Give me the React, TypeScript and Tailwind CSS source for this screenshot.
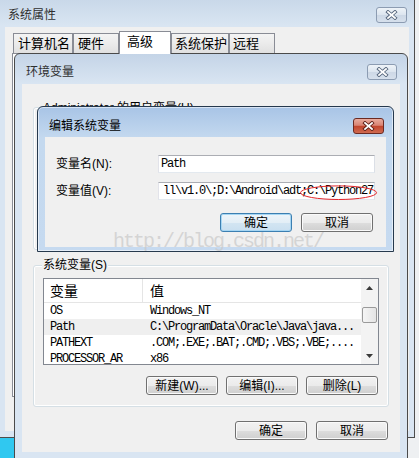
import React from 'react'

const ui = "font-['Liberation_Sans','Noto_Sans_CJK_SC',sans-serif]"
const mono = "font-['Liberation_Mono',monospace] tracking-[-1.2px]"

function CloseBtn({ active, className }: { active?: boolean; className: string }) {
    const edge = active ? '#5c1e16' : '#56667c'
    return (
        <div
            className={`${className} flex items-center justify-center rounded-[3px] border ${
                active
                    ? 'border-[#6b2a22] bg-[linear-gradient(#e9ab9d,#d98473_45%,#c2452d_52%,#cf6a50)]'
                    : 'border-[#8c9cb2] bg-[linear-gradient(#eef3f8,#dce5ef_50%,#cdd8e6_52%,#d6e0ec)]'
            }`}
        >
            <svg width="13" height="10" viewBox="0 0 13 10">
                <path d="M3 2 L10 8 M10 2 L3 8" stroke={edge} strokeWidth="3.6" strokeLinecap="square" />
                <path d="M3 2 L10 8 M10 2 L3 8" stroke="#fff" strokeWidth="1.8" strokeLinecap="square" />
            </svg>
        </div>
    )
}

function Btn({ label, focus }: { label: string; focus?: boolean }) {
    return (
        <div
            className={`flex h-[19px] w-[72px] items-center justify-center rounded-[3px] border text-[12px] leading-none text-black ${
                focus
                    ? 'border-[#3c7fb1] bg-[linear-gradient(#eef5fa,#e3eef6_50%,#d3e5f2_52%,#c9dff0)] shadow-[inset_0_0_0_1px_#a6d6f3]'
                    : 'border-[#707070] bg-[linear-gradient(#f2f2f2,#ebebeb_50%,#dddddd_52%,#cfcfcf)] shadow-[inset_0_0_0_1px_#fafafa]'
            }`}
        >
            {label}
        </div>
    )
}

const tabs: [string, string, boolean][] = [
    ['计算机名', 'w-[60px] pl-[4px]', false],
    ['硬件', 'w-[46px] pl-[4px]', false],
    ['高级', 'w-[52px] pl-[7px]', true],
    ['系统保护', 'w-[58px] pl-[3px]', false],
    ['远程', 'w-[46px] pl-[3px]', false],
]

const rows: [string, string][] = [
    ['OS', 'Windows_NT'],
    ['Path', 'C:\\ProgramData\\Oracle\\Java\\java...'],
    ['PATHEXT', '.COM;.EXE;.BAT;.CMD;.VBS;.VBE;....'],
    ['PROCESSOR_AR', 'x86'],
]

export default function App() {
    return (
        <div className={`relative h-[458px] w-[419px] overflow-hidden bg-[#eef0f2] text-[12px] text-black ${ui}`}>
            <div className="absolute left-0 top-[438px] h-[20px] w-[14px] bg-[#30c8f0]" />

            {/* 系统属性 */}
            <div className="absolute left-0 top-0 h-[438px] w-[415px] border-b border-r border-[#4d4d4d] bg-[linear-gradient(#c9d8e9,#d9e5f2_26px)]">
                <div className="flex h-[27px] items-start justify-between pl-[8px] pr-[7px] pt-[7px]">
                    <span className="leading-[16px] text-[#2f2f2f]">系统属性</span>
                    <CloseBtn className="h-[16px] w-[31px]" />
                </div>
                <div className="mx-[5px] h-[404px] bg-[#f0f0f0] px-[7px] pt-[5px]">
                    <div className="flex h-[21px] items-end">
                        {tabs.map(([t, cls, sel], i) => (
                            <div
                                key={t}
                                className={`${cls} ${i === 0 ? 'ml-[1px]' : ''} flex items-center border border-b-0 border-[#898c95] text-[13px] leading-none ${
                                    sel
                                        ? 'relative z-10 -mb-[1px] h-[23px] bg-white pb-[3px]'
                                        : 'h-[20px] bg-[linear-gradient(#f4f4f4,#ebebeb_50%,#e0e0e0)]'
                                }`}
                            >
                                {t}
                            </div>
                        ))}
                    </div>
                    <div className="h-[344px] border border-[#898c95] bg-white" />
                </div>
            </div>

            {/* 环境变量 */}
            <div className="absolute left-[14px] top-[53px] h-[410px] w-[394px] rounded-t-[6px] border border-[#4a4a4a] bg-[linear-gradient(#c4d4e7,#d9e5f2_30px)]">
                <div className="flex h-[30px] items-start justify-between pl-[11px] pr-[10px] pt-[10px]">
                    <span className="leading-[16px] text-[#2f2f2f]">环境变量</span>
                    <CloseBtn className="h-[16px] w-[30px]" />
                </div>
                <div className="mx-[7px] flex h-[368px] flex-col bg-[#f0f0f0]">
                    <div className="relative ml-[11px] mt-[23px] h-[143px] w-[356px] rounded-[3px] border border-[#d5dfe5] shadow-[inset_0_0_0_1px_#fff]">
                        <span className="absolute -top-[8px] left-[8px] bg-[#f0f0f0] px-[1px] leading-[16px]">Administrator 的用户变量(U)</span>
                    </div>

                    <div className="relative ml-[11px] mt-[15px] flex h-[142px] w-[356px] flex-col rounded-[3px] border border-[#d5dfe5] px-[9px] pt-[12px] shadow-[inset_0_0_0_1px_#fff]">
                        <span className="absolute -top-[9px] left-[8px] bg-[#f0f0f0] px-[1px] leading-[16px]">系统变量(S)</span>
                        <div className="flex h-[87px] w-full border border-[#828790] bg-white">
                            <div className="flex-1 overflow-hidden">
                                <div className="flex h-[24px] items-center border-b border-[#e5e5e5] text-[14px] leading-none">
                                    <div className="flex h-full w-[99px] items-center border-r border-[#e5e5e5] pl-[6px]">变量</div>
                                    <div className="pl-[7px]">值</div>
                                </div>
                                {rows.map(([n, v]) => (
                                    <div
                                        key={n}
                                        className={`flex h-[16px] items-center whitespace-nowrap text-[12px] leading-none ${mono} ${
                                            n === 'Path' ? 'bg-[#efefef]' : ''
                                        }`}
                                    >
                                        <div className="w-[106px] pl-[6px]">{n}</div>
                                        <div>{v}</div>
                                    </div>
                                ))}
                            </div>
                            <div className="flex w-[17px] flex-col bg-[#f3f3f3]">
                                <div className="flex h-[17px] items-center justify-center">
                                    <svg width="7" height="4" viewBox="0 0 7 4">
                                        <path d="M3.5 0 L7 4 L0 4 Z" fill="#3a3a3a" />
                                    </svg>
                                </div>
                                <div className="mx-[1px] mt-[11px] h-[16px] rounded-[2px] border border-[#9a9a9a] bg-[linear-gradient(90deg,#f5f5f5,#e4e4e4)]" />
                                <div className="flex-1" />
                                <div className="flex h-[17px] items-center justify-center">
                                    <svg width="7" height="4" viewBox="0 0 7 4">
                                        <path d="M0 0 L7 0 L3.5 4 Z" fill="#3a3a3a" />
                                    </svg>
                                </div>
                            </div>
                        </div>
                        <div className="mt-[11px] flex justify-end gap-[8px] pr-[1px]">
                            <Btn label="新建(W)..." />
                            <Btn label="编辑(I)..." />
                            <Btn label="删除(L)" />
                        </div>
                    </div>

                    <div className="mt-[14px] flex justify-end gap-[9px] pr-[12px]">
                        <Btn label="确定" />
                        <Btn label="取消" />
                    </div>
                </div>
            </div>

            {/* 编辑系统变量 */}
            <div className="absolute left-[37px] top-[106px] h-[146px] w-[357px] rounded-t-[6px] border border-[#26394d] bg-[linear-gradient(#a8c4e6,#c4d9ef_31px,#c6daf0)] shadow-[inset_0_0_0_1px_rgba(255,255,255,0.55)]">
                <div className="flex h-[30px] items-start justify-between pl-[11px] pr-[9px] pt-[11px]">
                    <span className="leading-[16px]">编辑系统变量</span>
                    <CloseBtn active className="h-[16px] w-[31px]" />
                </div>
                <div className="mx-[7px] flex h-[110px] flex-col bg-[#f0f0f0] pl-[11px] pr-[11px] pt-[18px]">
                    <div className="flex items-center">
                        <div className="w-[102px] leading-none">变量名(N):</div>
                        <div className={`flex h-[18px] w-[217px] items-center border border-[#abadb3] border-b-[#e3e9ef] border-l-[#e2e3ea] border-r-[#dbdfe6] bg-white pl-[2px] text-[12px] leading-none ${mono}`}>
                            Path
                        </div>
                    </div>
                    <div className="mt-[9px] flex items-center">
                        <div className="w-[102px] leading-none">变量值(V):</div>
                        <div className={`flex h-[18px] w-[217px] items-center justify-end overflow-hidden whitespace-nowrap border border-[#abadb3] border-b-[#e3e9ef] border-l-[#e2e3ea] border-r-[#dbdfe6] bg-white pr-[1px] text-[12px] leading-none ${mono}`}>
                            <span>ll\v1.0\;D:\Android\adt;C:\Python27</span>
                        </div>
                    </div>
                    <div className="mt-[13px] flex justify-end gap-[9px] pr-[2px]">
                        <Btn label="确定" focus />
                        <Btn label="取消" />
                    </div>
                </div>
            </div>

            <svg className="absolute left-[299px] top-[184px]" width="80" height="18" viewBox="0 0 80 18">
                <ellipse cx="39.5" cy="8.7" rx="38" ry="6.8" fill="none" stroke="#e3262b" strokeWidth="1" />
            </svg>

            <div className="absolute left-[113px] top-[232px] font-['Liberation_Mono',monospace] text-[20px] leading-[20px] tracking-[-2px] text-[#c8c8c8]/70">
                http://blog.csdn.net/
            </div>
        </div>
    )
}
